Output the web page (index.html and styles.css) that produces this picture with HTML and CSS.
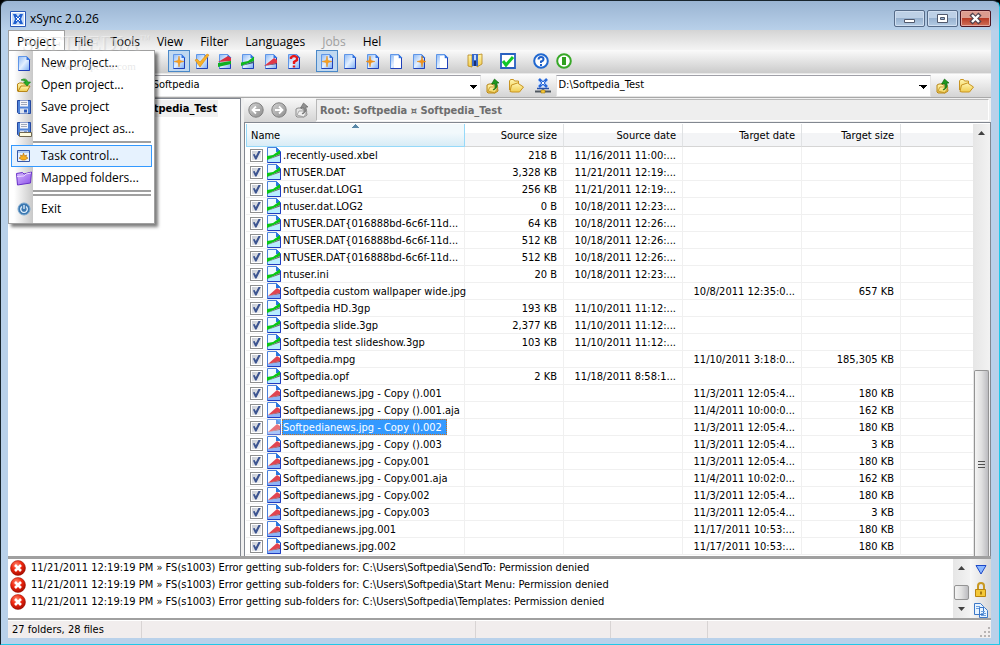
FILE: index.html
```html
<!DOCTYPE html>
<html lang="en">
<head>
  <meta charset="UTF-8">
  <title>xSync 2.0.26</title>
  <link rel="stylesheet" href="styles.css">
</head>
<body>

<svg class="sprite" aria-hidden="true">
  <defs>
    <linearGradient id="pageFill" x1="0" y1="0" x2="1" y2="1">
      <stop offset="0" stop-color="#8cb8f4"/><stop offset=".5" stop-color="#e4f0ff"/><stop offset="1" stop-color="#78acf4"/>
    </linearGradient>
    <linearGradient id="gold" x1="0" y1="0" x2="0" y2="1">
      <stop offset="0" stop-color="#fff6b0"/><stop offset="1" stop-color="#f0cc50"/>
    </linearGradient>
    <radialGradient id="redBall" cx=".4" cy=".3" r=".7">
      <stop offset="0" stop-color="#ff8a70"/><stop offset=".5" stop-color="#f02810"/><stop offset="1" stop-color="#a80c00"/>
    </radialGradient>
    <linearGradient id="violet" x1="0" y1="0" x2="1" y2="1">
      <stop offset="0" stop-color="#d8b8ff"/><stop offset="1" stop-color="#8a50e8"/>
    </linearGradient>
    <linearGradient id="metal" x1="0" y1="0" x2="1" y2="1">
      <stop offset="0" stop-color="#d4d4d4"/><stop offset="1" stop-color="#8c8c8c"/>
    </linearGradient>
    <symbol id="page" viewBox="0 0 16 16">
      <path d="M2.500 1.500h8l3 3v11h-11z" fill="url(#pageFill)" stroke="#5f96e8"/>
      <path d="M13.500 5v10.500h-11" fill="none" stroke="#2040b8"/>
      <path d="M10.500 1v4h4z" fill="#3474e0"/>
    </symbol>
    <symbol id="page-star" viewBox="0 0 16 16">
      <use href="#page"/>
      <path d="M8 3l1 4.500 4 1-4 1-1 4.500-1-4.500-4-1 4-1z" fill="#f8a020" stroke="#e08a18" stroke-width=".5"/>
    </symbol>
    <symbol id="page-left" viewBox="0 0 16 16">
      <use href="#page"/>
      <path d="M5 3l1 4.500 4 1-4 1-1 4.500-1-4.500-3-1 3-1z" fill="#f09018" stroke="#e08a18" stroke-width=".5"/>
    </symbol>
    <symbol id="page-right" viewBox="0 0 16 16">
      <use href="#page"/>
      <path d="M11 3l1 4.500 3 1-3 1-1 4.500-1-4.500-4-1 4-1z" fill="#f09018" stroke="#e08a18" stroke-width=".5"/>
    </symbol>
    <symbol id="page-blank" viewBox="0 0 16 16">
      <use href="#page"/><path d="M6 3h4.500v3H13v9H6z" fill="#fff"/>
    </symbol>
    <symbol id="page-check" viewBox="0 0 16 16">
      <use href="#page"/><path d="M1 7l2-1 3 3 7-8 2 1-9 12z" fill="#f8b028" stroke="#d88a10" stroke-width=".6"/>
    </symbol>
    <symbol id="page-both" viewBox="0 0 16 16">
      <use href="#page"/>
      <path d="M1 9l10-6 3 2v3z" fill="#d83040"/><path d="M1 14v-4l13-2v3z" fill="#10b020"/>
    </symbol>
    <symbol id="page-green" viewBox="0 0 16 16">
      <use href="#page"/><path d="M1 13V9.500L8 8l6-4.500V8z" fill="#10b820"/><path d="M1 13l13-5v2z" fill="#406078"/>
    </symbol>
    <symbol id="page-red" viewBox="0 0 16 16">
      <use href="#page"/><path d="M1 13l10-8 3 2v3z" fill="#e03848"/><path d="M1 13l13-3v1z" fill="#603050"/>
    </symbol>
    <symbol id="page-ask" viewBox="0 0 16 16">
      <use href="#page"/>
      <path d="M5 6V4.500q3-3 6 0V7L8 9v2M8 12.500v2" fill="none" stroke="#e81818" stroke-width="2.400"/>
    </symbol>
    <symbol id="file-green" viewBox="0 0 14 16">
      <path d="M.5.500h9l4 4v11H.5z" fill="#eefaff" stroke="#4a80dc"/>
      <path d="M1 12l12-3v6H1z" fill="#b8ecff"/>
      <path d="M9 0v5h5z" fill="#2878e0"/><path d="M.5 15.500h13V5" fill="none" stroke="#203cc0"/>
      <path d="M0 13V9l6-1 7-5v4z" fill="#08c814"/><path d="M0 13l13-6v1.500z" fill="#606c70"/>
    </symbol>
    <symbol id="file-red" viewBox="0 0 14 16">
      <path d="M.5.500h9l4 4v11H.5z" fill="#f8fcff" stroke="#4a80dc"/>
      <path d="M1 13l12-2v4H1z" fill="#8cb4f8"/>
      <path d="M9 0v5h5z" fill="#2878e0"/><path d="M.5 15.500h13V5" fill="none" stroke="#203cc0"/>
      <path d="M1 13l9-8 3 2v3z" fill="#e04450"/><path d="M1 13l12-3v1z" fill="#803848"/>
    </symbol>
    <symbol id="folder" viewBox="0 0 16 16">
      <path d="M1.500 12V3l1-1.500h3l1 1.500h4v3" fill="url(#gold)" stroke="#c89420"/>
      <path d="M2 13.500L3.500 7l6-2 6 4-4 5H4z" fill="url(#gold)" stroke="#c89420"/>
    </symbol>
    <symbol id="folder-open" viewBox="0 0 16 16">
      <path d="M1.500 14V7l2-1h3l1 1h4v7z" fill="url(#gold)" stroke="#b88618"/>
      <path d="M2 14.500l3-5.500h9l-3 5.500z" fill="url(#gold)" stroke="#b88618"/>
      <path d="M5 3q5-3 7 2h2.500L11 9 7.500 5H10Q8 3 5 3z" fill="#28b028" stroke="#107810" stroke-width=".6"/>
    </symbol>
    <symbol id="folder-up" viewBox="0 0 16 16">
      <path d="M2 14V7l2-1h3l1 1h4l1 6-3 2H3z" fill="url(#gold)" stroke="#b88618"/>
      <path d="M3 13l2-4h8l-3 6z" fill="url(#gold)" stroke="#b88618" stroke-width=".7"/>
      <path d="M8 12q3-2 2-6H6.500L9.500 1 14 5h-2q1 6-4 7z" fill="#209820" stroke="#086008" stroke-width=".6"/>
    </symbol>
    <symbol id="floppy" viewBox="0 0 16 16">
      <path d="M1.500 1.500h13v13h-12l-1-1z" fill="#5084d8" stroke="#2448a0"/>
      <path d="M4 1.500h8v6H4z" fill="#f4f6fa"/><path d="M5 3.500h6M5 5.500h6" stroke="#a0a8b8"/>
      <path d="M4 9.500h8v5H4z" fill="#dde4f0"/><path d="M8 10.500h3v3H8z" fill="#2c58b8"/>
    </symbol>
    <symbol id="floppy-as" viewBox="0 0 16 16">
      <use href="#floppy"/><path d="M3.500 11.500h12v4h-12z" fill="#fffce0" stroke="#706850"/>
    </symbol>
    <symbol id="task" viewBox="0 0 16 16">
      <path d="M1.500 2.500h12v11h-12z" fill="#e8f2ff" stroke="#3458a8"/><path d="M2 3h11v2H2z" fill="#b0ccf4"/>
      <path d="M7.500 5l1 3 2-1-.5 2 2 1-3 2h-3l-3-2 2-1-.5-2 2 1z" fill="#f8b020" stroke="#b06c08" stroke-width=".6"/>
    </symbol>
    <symbol id="mapped" viewBox="0 0 16 16">
      <path d="M1.500 15L.5 3.500l6-1L8 4l7.500-2-1 11z" fill="url(#violet)" stroke="#6830c8"/>
      <path d="M1 6.500l7-.5 2-2 5-1" fill="none" stroke="#ead8ff"/>
    </symbol>
    <symbol id="power" viewBox="0 0 16 16">
      <circle cx="8" cy="8" r="6" fill="#3c78b0" stroke="#7aa8d0"/>
      <path d="M6 5.500a3.300 3.300 0 1 0 4 0M8 4v4" fill="none" stroke="#e8f4ff" stroke-width="1.300"/>
    </symbol>
    <symbol id="logo" viewBox="0 0 16 16">
      <path d="M.5.500h15v15H.5z" fill="#fff" stroke="#2858b8"/><path d="M2 2h12v12H2z" fill="#c8dcf8"/>
      <path d="M3 3h3l2 3 2-3h3l-2 5 2 5h-3l-2-3-2 3H3l2-5z" fill="#2060d0"/><path d="M6 6l4 4M10 6l-4 4" stroke="#fff"/>
    </symbol>
    <symbol id="network" viewBox="0 0 16 16">
      <path d="M3 1h10v9H3z" fill="#dce8fc"/><path d="M4 1l8 8M12 1L4 9" stroke="#2868d8" stroke-width="2.500"/>
      <path d="M6.500 3.500l3 3M9.500 3.500l-3 3" stroke="#fff"/>
      <path d="M2 10.500h12M8 10v4" stroke="#2850a8" stroke-width="1.500"/><path d="M0 13.500h16" stroke="#505860" stroke-width="2"/>
      <path d="M6 12h4v3H6z" fill="#f8c838" stroke="#a07810" stroke-width=".6"/>
    </symbol>
    <symbol id="binder" viewBox="0 0 16 16">
      <path d="M1 2h4v12l-4-1zM10 2l5-1v10l-5 3z" fill="url(#gold)" stroke="#b88618" stroke-width=".8"/>
      <path d="M5 1h6v12H5z" fill="#3868c8"/><path d="M7 2h2v5H7z" fill="#c0d8ff"/><path d="M7 8h2v5H7z" fill="#183070"/>
    </symbol>
    <symbol id="tickbox" viewBox="0 0 16 16">
      <path d="M1 1h14v14H1z" fill="#fff" stroke="#2860c0" stroke-width="1.800"/>
      <path d="M3 8l3 4 7-8" fill="none" stroke="#10c828" stroke-width="3"/>
    </symbol>
    <symbol id="help" viewBox="0 0 16 16">
      <circle cx="8" cy="8" r="6.800" fill="#fff" stroke="#2068d0" stroke-width="2"/>
      <path d="M5.500 6.500q0-2.500 2.500-2.500t2.500 2-2.500 2.500V10M8 11v2" fill="none" stroke="#2060c8" stroke-width="2"/>
    </symbol>
    <symbol id="info" viewBox="0 0 16 16">
      <circle cx="8" cy="8" r="6.800" fill="#fff" stroke="#38a828" stroke-width="2"/>
      <path d="M6 4h4v8H6z" fill="#30a020"/>
    </symbol>
    <symbol id="nav-back" viewBox="0 0 16 16">
      <circle cx="8" cy="8" r="7.200" fill="url(#metal)" stroke="#808080"/>
      <path d="M12 8H5M8 4.500L4.500 8 8 11.500" fill="none" stroke="#fff" stroke-width="1.800"/>
    </symbol>
    <symbol id="nav-next" viewBox="0 0 16 16">
      <circle cx="8" cy="8" r="7.200" fill="url(#metal)" stroke="#808080"/>
      <path d="M4 8h7M8 4.500L11.500 8 8 11.500" fill="none" stroke="#fff" stroke-width="1.800"/>
    </symbol>
    <symbol id="nav-up" viewBox="0 0 16 16">
      <path d="M2 14V7l2-1h3l1 1h4l1 6-3 2H3z" fill="#e4e4e4" stroke="#8c8c8c"/>
      <path d="M3 13l2-4h8l-3 6z" fill="#f0f0f0" stroke="#8c8c8c" stroke-width=".7"/>
      <path d="M8 12q3-2 2-6H6.500L9.500 1 14 5h-2q1 6-4 7z" fill="#909090" stroke="#686868" stroke-width=".7"/>
    </symbol>
    <symbol id="error" viewBox="0 0 16 16">
      <circle cx="8" cy="8" r="7.500" fill="url(#redBall)" stroke="#981000" stroke-width=".5"/>
      <path d="M5 5l6 6M11 5l-6 6" stroke="#fff" stroke-width="2.600"/>
    </symbol>
    <symbol id="filter-down" viewBox="0 0 16 16">
      <path d="M3 3.500h10L8 12z" fill="#8cb8ff" stroke="#1c48c8"/>
    </symbol>
    <symbol id="lock" viewBox="0 0 16 16">
      <path d="M5 8V4q0-3 3-3t3 3v4" fill="none" stroke="#c89820" stroke-width="2"/>
      <path d="M2.500 7.500h10v7h-10z" fill="#f4c838" stroke="#b88410"/><path d="M8 9.500v3" stroke="#906000" stroke-width="1.500"/>
    </symbol>
    <symbol id="copy" viewBox="0 0 16 16">
      <path d="M1.500 1.500h6l3 3v8h-9zM6.500 5.500h5l3 3v7h-8z" fill="#e8f4ff" stroke="#3c78c8"/>
      <path d="M3 4.500h4M3 6.500h3M8 9.500h4M8 11.500h5M8 13.500h5" stroke="#6ca0e0"/>
    </symbol>
  </defs>
</svg>

<div class="window">
  <header class="titlebar">
    <svg class="icon"><use href="#logo"/></svg>
    <h1>xSync 2.0.26</h1>
    <div class="window-buttons">
      <button aria-label="Minimize"><svg viewBox="0 0 29 15"><path d="M9.500 8.500h10v3h-10z" fill="#fff" stroke="#50586c"/></svg></button>
      <button aria-label="Maximize"><svg viewBox="0 0 29 15"><path d="M9.500 3.500h10v8h-10zM12.500 6.500v2h4v-2z" fill="#fff" fill-rule="evenodd" stroke="#50586c"/></svg></button>
      <button class="close" aria-label="Close"><svg viewBox="0 0 29 15"><path d="M10 3l9 9M19 3l-9 9" stroke="#50404c" stroke-width="4.500"/><path d="M11 4l7 7M18 4l-7 7" stroke="#fff" stroke-width="2.400"/></svg></button>
    </div>
  </header>

  <div class="client">
    <nav class="menubar">
      <button class="open">Project</button>
      <button>File</button>
      <button>Tools</button>
      <button>View</button>
      <button>Filter</button>
      <button>Languages</button>
      <button disabled>Jobs</button>
      <button>Hel</button>
      <div class="menu">
        <button><svg class="icon"><use href="#page"/></svg>New project...</button>
        <button><svg class="icon"><use href="#folder-open"/></svg>Open project...</button>
        <button><svg class="icon"><use href="#floppy"/></svg>Save project</button>
        <button><svg class="icon"><use href="#floppy-as"/></svg>Save project as...</button>
        <hr>
        <button class="active"><svg class="icon"><use href="#task"/></svg>Task control...</button>
        <button><svg class="icon"><use href="#mapped"/></svg>Mapped folders...</button>
        <hr>
        <hr>
        <button><svg class="icon"><use href="#power"/></svg>Exit</button>
      </div>
      <div class="watermark"><b>SOFTPEDIA<sup>™</sup></b><span>www.softpedia.com</span></div>
    </nav>

    <div class="toolbar" id="toolbar"></div>

    <div class="address">
      <div class="source-label"></div>
      <select aria-label="Source folder"><option>C:\Users\Softpedia</option></select>
      <button aria-label="Source up"><svg class="icon"><use href="#folder-up"/></svg></button>
      <button aria-label="Browse source"><svg class="icon"><use href="#folder"/></svg></button>
      <button class="net" aria-label="Network"><svg class="icon"><use href="#network"/></svg></button>
      <select aria-label="Target folder"><option>D:\Softpedia_Test</option></select>
      <button aria-label="Target up"><svg class="icon"><use href="#folder-up"/></svg></button>
      <button class="last" aria-label="Browse target"><svg class="icon"><use href="#folder"/></svg></button>
    </div>

    <main class="main">
      <aside class="tree"><span>Softpedia ¤ Softpedia_Test</span></aside>
      <section class="files">
        <div class="pathbar">
          <button aria-label="Back"><svg class="icon"><use href="#nav-back"/></svg></button>
          <button aria-label="Forward"><svg class="icon"><use href="#nav-next"/></svg></button>
          <button aria-label="Up"><svg class="icon"><use href="#nav-up"/></svg></button>
          <div class="path">Root: Softpedia ¤ Softpedia_Test</div>
        </div>
        <div class="list">
          <div class="list-view">
            <table>
              <colgroup>
                <col class="c-name"><col class="c-size"><col class="c-date"><col class="c-date"><col class="c-size"><col>
              </colgroup>
              <thead>
                <tr>
                  <th class="sorted">Name</th>
                  <th>Source size</th>
                  <th>Source date</th>
                  <th>Target date</th>
                  <th>Target size</th>
                  <th></th>
                </tr>
              </thead>
              <tbody id="rows"></tbody>
            </table>
          </div>
          <div class="scrollbar">
            <i class="up"></i>
            <div class="thumb"><i></i><i></i><i></i></div>
          </div>
        </div>
      </section>
    </main>

    <section class="log">
      <ul>
        <li><svg class="icon"><use href="#error"/></svg>11/21/2011 12:19:19 PM » FS(s1003) Error getting sub-folders for: C:\Users\Softpedia\SendTo: Permission denied</li>
        <li><svg class="icon"><use href="#error"/></svg>11/21/2011 12:19:19 PM » FS(s1003) Error getting sub-folders for: C:\Users\Softpedia\Start Menu: Permission denied</li>
        <li><svg class="icon"><use href="#error"/></svg>11/21/2011 12:19:19 PM » FS(s1003) Error getting sub-folders for: C:\Users\Softpedia\Templates: Permission denied</li>
      </ul>
      <div class="scrollbar small">
        <i class="up"></i>
        <div class="thumb"></div>
        <i class="down"></i>
      </div>
      <div class="log-tools">
        <button aria-label="Filter log"><svg class="icon"><use href="#filter-down"/></svg></button>
        <button aria-label="Lock log"><svg class="icon"><use href="#lock"/></svg></button>
        <button aria-label="Copy log"><svg class="icon"><use href="#copy"/></svg></button>
      </div>
    </section>

    <footer class="status">
      <span class="s1">27 folders, 28 files</span>
      <span class="s2"></span>
      <span class="s3"></span>
      <span class="s4"></span>
      <span class="s5"></span>
      <svg class="grip" viewBox="0 0 12 12"><path d="M9 1h2v2H9zM5 5h2v2H5zM9 5h2v2H9zM1 9h2v2H1zM5 9h2v2H5zM9 9h2v2H9z" fill="#b8b4b4"/></svg>
    </footer>
  </div>
</div>

<script>
  // a star after the name marks a pressed button
  const groups = [
    ['page', 'folder-open', 'floppy', 'floppy-as', 'task', 'mapped'],
    ['page-star*', 'page-check', 'page-both', 'page-green', 'page-red', 'page-ask'],
    ['page-star*', 'page', 'page-left', 'page-blank', 'page-right', 'page-blank'],
    ['binder'],
    ['tickbox'],
    ['help', 'info']
  ];

  document.getElementById('toolbar').innerHTML = groups.map(group =>
    '<div class="group">' + group.map(item => {
      const name = item.replace('*', '');
      const cls = item.endsWith('*') ? ' class="pressed"' : '';
      return `<button${cls} aria-label="${name}"><svg class="icon"><use href="#${name}"/></svg></button>`;
    }).join('') + '</div>'
  ).join('');

  // name, source size, source date, target date, target size
  const files = [
    ['.recently-used.xbel', '218 B', '11/16/2011 11:00:...', '', ''],
    ['NTUSER.DAT', '3,328 KB', '11/21/2011 12:19:...', '', ''],
    ['ntuser.dat.LOG1', '256 KB', '11/21/2011 12:19:...', '', ''],
    ['ntuser.dat.LOG2', '0 B', '10/18/2011 12:23:...', '', ''],
    ['NTUSER.DAT{016888bd-6c6f-11d...', '64 KB', '10/18/2011 12:26:...', '', ''],
    ['NTUSER.DAT{016888bd-6c6f-11d...', '512 KB', '10/18/2011 12:26:...', '', ''],
    ['NTUSER.DAT{016888bd-6c6f-11d...', '512 KB', '10/18/2011 12:26:...', '', ''],
    ['ntuser.ini', '20 B', '10/18/2011 12:23:...', '', ''],
    ['Softpedia custom wallpaper wide.jpg', '', '', '10/8/2011 12:35:0...', '657 KB'],
    ['Softpedia HD.3gp', '193 KB', '11/10/2011 11:12:...', '', ''],
    ['Softpedia slide.3gp', '2,377 KB', '11/10/2011 11:12:...', '', ''],
    ['Softpedia test slideshow.3gp', '103 KB', '11/10/2011 11:12:...', '', ''],
    ['Softpedia.mpg', '', '', '11/10/2011 3:18:0...', '185,305 KB'],
    ['Softpedia.opf', '2 KB', '11/18/2011 8:58:1...', '', ''],
    ['Softpedianews.jpg - Copy ().001', '', '', '11/3/2011 12:05:4...', '180 KB'],
    ['Softpedianews.jpg - Copy ().001.aja', '', '', '11/4/2011 10:00:0...', '162 KB'],
    ['Softpedianews.jpg - Copy ().002', '', '', '11/3/2011 12:05:4...', '180 KB'],
    ['Softpedianews.jpg - Copy ().003', '', '', '11/3/2011 12:05:4...', '3 KB'],
    ['Softpedianews.jpg - Copy.001', '', '', '11/3/2011 12:05:4...', '180 KB'],
    ['Softpedianews.jpg - Copy.001.aja', '', '', '11/4/2011 10:02:0...', '162 KB'],
    ['Softpedianews.jpg - Copy.002', '', '', '11/3/2011 12:05:4...', '180 KB'],
    ['Softpedianews.jpg - Copy.003', '', '', '11/3/2011 12:05:4...', '3 KB'],
    ['Softpedianews.jpg.001', '', '', '11/17/2011 10:53:...', '180 KB'],
    ['Softpedianews.jpg.002', '', '', '11/17/2011 10:53:...', '180 KB']
  ];
  const selected = 16;

  document.getElementById('rows').innerHTML = files.map((f, i) => `
    <tr${i === selected ? ' class="selected"' : ''}>
      <td><label><input type="checkbox" checked><svg class="file"><use href="#${f[1] ? 'file-green' : 'file-red'}"/></svg><span>${f[0]}</span></label></td>
      <td>${f[1]}</td><td>${f[2]}</td><td>${f[3]}</td><td>${f[4]}</td><td></td>
    </tr>`).join('');
</script>

</body>
</html>
```

FILE: styles.css
```css
* { box-sizing: border-box; }
html, body { height: 100%; }
body {
  margin: 0;
  background: #000;
  color: #000;
  font: 11px/17px "DejaVu Sans Condensed", "Noto Sans", sans-serif;
  overflow: hidden;
}
button {
  margin: 0;
  padding: 0;
  border: 0;
  background: none;
  color: inherit;
  font: inherit;
}
.sprite { position: absolute; width: 0; height: 0; }
.icon { width: 16px; height: 16px; flex: none; display: block; }

.window {
  height: 100%;
  display: flex;
  flex-direction: column;
  padding: 0 8px 6px 7px;
  border: 1px solid #18242c;
  border-right-color: #20c8e8;
  border-bottom-color: #20c8e8;
  border-radius: 7px 7px 0 0;
  background: linear-gradient(#9ab4d2, #b9d1ea 30px);
}
.titlebar {
  height: 29px;
  flex: none;
  display: flex;
  align-items: center;
  gap: 4px;
  padding: 6px 0 0 2px;
}
.titlebar h1 {
  margin: 0;
  flex: 1;
  font: 12px/16px "Open Sans", sans-serif;
}
.window-buttons { display: flex; gap: 2px; }
.window-buttons button {
  width: 31px;
  height: 17px;
  border: 1px solid #566b88;
  border-radius: 2px;
  box-shadow: inset 0 0 0 1px #d0def0;
  background: linear-gradient(#bdd0e6 50%, #98b2d0 50%, #b4cce4);
}
.window-buttons svg { width: 29px; height: 15px; display: block; }
.window-buttons .close {
  border-color: #4c1420;
  box-shadow: inset 0 0 0 1px #e4a8a0;
  background: linear-gradient(#dc9c90 50%, #b83c28 50%, #d07058);
}

.client {
  flex: 1;
  min-height: 0;
  display: flex;
  flex-direction: column;
  background: #f0f0f0;
}
.menubar {
  position: relative;
  z-index: 2;
  height: 20px;
  flex: none;
  display: flex;
  gap: 1px;
  background: linear-gradient(#d4d4d4, #f4f4f4);
  font: 12px/20px "Open Sans", sans-serif;
}
.menubar > button { padding: 2px 8px 0; white-space: nowrap; }
.menubar > button:disabled { color: #a0a0a0; }
.menubar > .open {
  padding-top: 1px;
  border: 1px solid #a0a0a0;
  border-bottom: 0;
  background: #fff;
}
.menu {
  position: absolute;
  top: 20px;
  left: 0;
  width: 147px;
  padding: 1px 2px 3px 2px;
  border: 1px solid #a0a0a0;
  background: linear-gradient(90deg, #fff 2px, #fff 5px, #c8c8c8 24px, #fff 24px);
  box-shadow: 3px 3px 3px rgba(0, 0, 0, .5);
}
.menu button {
  display: flex;
  align-items: center;
  gap: 9px;
  width: 100%;
  height: 22px;
  padding-left: 4px;
  white-space: nowrap;
  border: 1px solid transparent;
}
.menu .active { border-color: #3399ff; background: #e6f2fe; }
.menu hr {
  height: 2px;
  margin: 1px 1px 2px 22px;
  border: 0;
  background: #a0a0a0;
}
.watermark {
  position: absolute;
  top: 3px;
  left: 14px;
  width: 140px;
  color: rgba(190, 190, 190, .35);
  text-shadow: -1px -1px rgba(255, 255, 255, .4);
  pointer-events: none;
}
.watermark b {
  display: block;
  font: 22px/22px "Liberation Serif", serif;
}
.watermark sup { font-size: 10px; line-height: 0; }
.watermark span {
  display: block;
  padding-left: 26px;
  font: 11px/22px "Liberation Serif", serif;
}

.toolbar {
  height: 24px;
  flex: none;
  display: flex;
  gap: 10px;
  padding: 0 0 0 12px;
  border-bottom: 1px solid #e8e8e8;
  background: linear-gradient(#fafafa, #cbcbcb);
}
.group { display: flex; gap: 1px; padding-right: 1px; }
.group button {
  width: 22px;
  height: 22px;
  padding: 2px;
  border: 1px solid transparent;
}
.group .pressed { border-color: #4a88c8; background: #c0d8f0; }

.address {
  height: 24px;
  flex: none;
  display: flex;
  align-items: center;
  background: linear-gradient(#fcfcfc, #d4d4d4);
  border-bottom: 1px solid #a8a8a8;
}
.source-label { width: 97px; }
.address select {
  appearance: none;
  flex: 1;
  min-width: 0;
  height: 22px;
  padding: 0 0 2px 2px;
  border: 1px solid #e4e4e4;
  border-top-color: #a0a0a8;
  border-radius: 0;
  color: #000;
  font: inherit;
  background: conic-gradient(from -45deg at 50% 100%, #000 90deg, #fff 0) right 3px top 9px / 8px 4px no-repeat, #fff;
}
.address button { width: 23px; padding-left: 4px; }
.address .net { width: 29px; padding-left: 8px; }
.address .last { width: 37px; }

.main {
  flex: 1;
  min-height: 0;
  display: flex;
  gap: 3px;
}
.tree {
  width: 233px;
  flex: none;
  display: flex;
  justify-content: flex-end;
  align-items: flex-start;
  padding: 1px 22px 0 0;
  border: 1px solid #828790;
  border-left: 0;
  border-bottom: 0;
  background: #fff;
  font-weight: bold;
  white-space: nowrap;
}
.tree span { background: #f0f0f0; padding-right: 1px; }
.files {
  flex: 1;
  min-width: 0;
  display: flex;
  flex-direction: column;
}
.pathbar {
  height: 24px;
  flex: none;
  display: flex;
  align-items: center;
  background: linear-gradient(#f8f8f8, #d4d4d4) 0 0 / 72px 100% no-repeat, #f0f0f0;
}
.pathbar button { width: 23px; padding-left: 4px; }
.path {
  flex: 1;
  height: 22px;
  margin: 0 2px 0 3px;
  padding-left: 3px;
  border: 1px solid #b8b8b8;
  border-right-color: #fff;
  border-bottom-color: #fff;
  background: #eee;
  color: #6d6d6d;
  font-weight: bold;
  line-height: 21px;
}
.list {
  flex: 1;
  min-height: 0;
  display: flex;
  padding: 1px 0 0 1px;
  border: 1px solid #828790;
  border-bottom: 0;
  background: #fff;
}
.list-view { flex: 1; min-width: 0; overflow: hidden; }
table {
  width: 100%;
  table-layout: fixed;
  border-collapse: separate;
  border-spacing: 0;
}
.c-name { width: 219px; }
.c-size { width: 99px; }
.c-date { width: 119px; }
th {
  height: 23px;
  padding: 0 6px;
  border-right: 1px solid #e0e2e4;
  border-bottom: 1px solid #d5d5d5;
  background: linear-gradient(#fff 40%, #f3f4f6 40%);
  font-weight: normal;
  text-align: right;
}
th.sorted {
  padding-left: 4px;
  border-right-color: #96d9f9;
  border-left: 1px solid #96d9f9;
  border-bottom-color: #96d9f9;
  text-align: left;
  background:
    conic-gradient(from 135deg at 50% 0, #5888a8 90deg, transparent 0) center top / 7px 4px no-repeat,
    linear-gradient(#f2f9fc 40%, #d8ecf6);
}
td {
  height: 17px;
  padding: 1px 6px 0;
  border-right: 1px solid #f0f0f0;
  border-bottom: 1px solid #f0f0f0;
  line-height: 15px;
  text-align: right;
  white-space: nowrap;
}
td:first-child { padding: 0; text-align: left; }
td:last-child, th:last-child { border-right: 0; }
td label { display: flex; height: 16px; align-items: center; }
td input {
  appearance: none;
  width: 13px;
  height: 13px;
  margin: 0 4px;
  padding: 1px;
  flex: none;
  border: 1px solid #8e8f8f;
  background: linear-gradient(135deg, #c8ccd4, #f4f4f4) content-box, #fff;
}
td input:checked::before {
  content: "";
  display: block;
  width: 9px;
  height: 9px;
  background: #3c5490;
  clip-path: polygon(10% 45%, 30% 40%, 42% 65%, 75% 0, 100% 0, 50% 100%, 35% 100%);
}
.file { width: 14px; height: 16px; flex: none; margin-right: 1px; }
td span { padding: 1px 5px 0 1px; }
.selected span {
  background: #3399ff;
  color: #fff;
  outline: 1px dotted #c87020;
  outline-offset: -1px;
}
.selected .file { background: #3399ff; opacity: .75; }

.scrollbar {
  width: 17px;
  flex: none;
  display: flex;
  flex-direction: column;
  align-items: center;
  background: linear-gradient(90deg, #e6e6e6, #f2f2f2);
}
.scrollbar .up, .scrollbar .down {
  width: 7px;
  height: 4px;
  margin: 7px 0;
  background: #404040;
  clip-path: polygon(50% 0, 100% 100%, 0 100%);
}
.scrollbar .down { clip-path: polygon(0 0, 100% 0, 50% 100%); }
.scrollbar .thumb {
  width: 15px;
  height: 43%;
  margin-top: auto;
  display: flex;
  flex-direction: column;
  align-items: center;
  justify-content: center;
  gap: 1px;
  border: 1px solid #949494;
  border-bottom: 0;
  border-radius: 2px 2px 0 0;
  background: linear-gradient(90deg, #f4f4f4, #e0e0e0 50%, #bcbcc0);
}
.thumb i { width: 7px; height: 2px; border-bottom: 1px solid #505050; }

.log {
  height: 64px;
  flex: none;
  display: flex;
  border-top: 3px solid #a0a0a0;
  border-bottom: 2px solid #a0a0a0;
  background: #fff;
}
.log ul {
  flex: 1;
  min-width: 0;
  margin: 0;
  padding: 0 0 0 2px;
  list-style: none;
}
.log li {
  display: flex;
  align-items: center;
  gap: 5px;
  height: 17px;
  white-space: nowrap;
}
.scrollbar.small .thumb {
  height: 15px;
  margin: auto 0 0;
  border-bottom: 1px solid #949494;
  border-radius: 2px;
}
.log-tools {
  width: 21px;
  display: flex;
  flex-direction: column;
  align-items: center;
  justify-content: space-between;
  padding: 3px 0 0;
  background: linear-gradient(90deg, #f8f8f8, #d8d8d8);
}

.status {
  height: 18px;
  flex: none;
  display: flex;
  align-items: stretch;
  border-top: 1px solid #fff;
  background: #f1eded;
}
.status span {
  padding-left: 4px;
  border-right: 1px solid #d8d4d4;
}
.status .s1 { width: 134px; }
.status .s2 { flex: 338; }
.status .s3 { flex: 134; }
.status .s4 { flex: 95; }
.status .s5 { flex: 274; border-right: 0; }
.grip { width: 12px; height: 12px; align-self: flex-end; }
```
